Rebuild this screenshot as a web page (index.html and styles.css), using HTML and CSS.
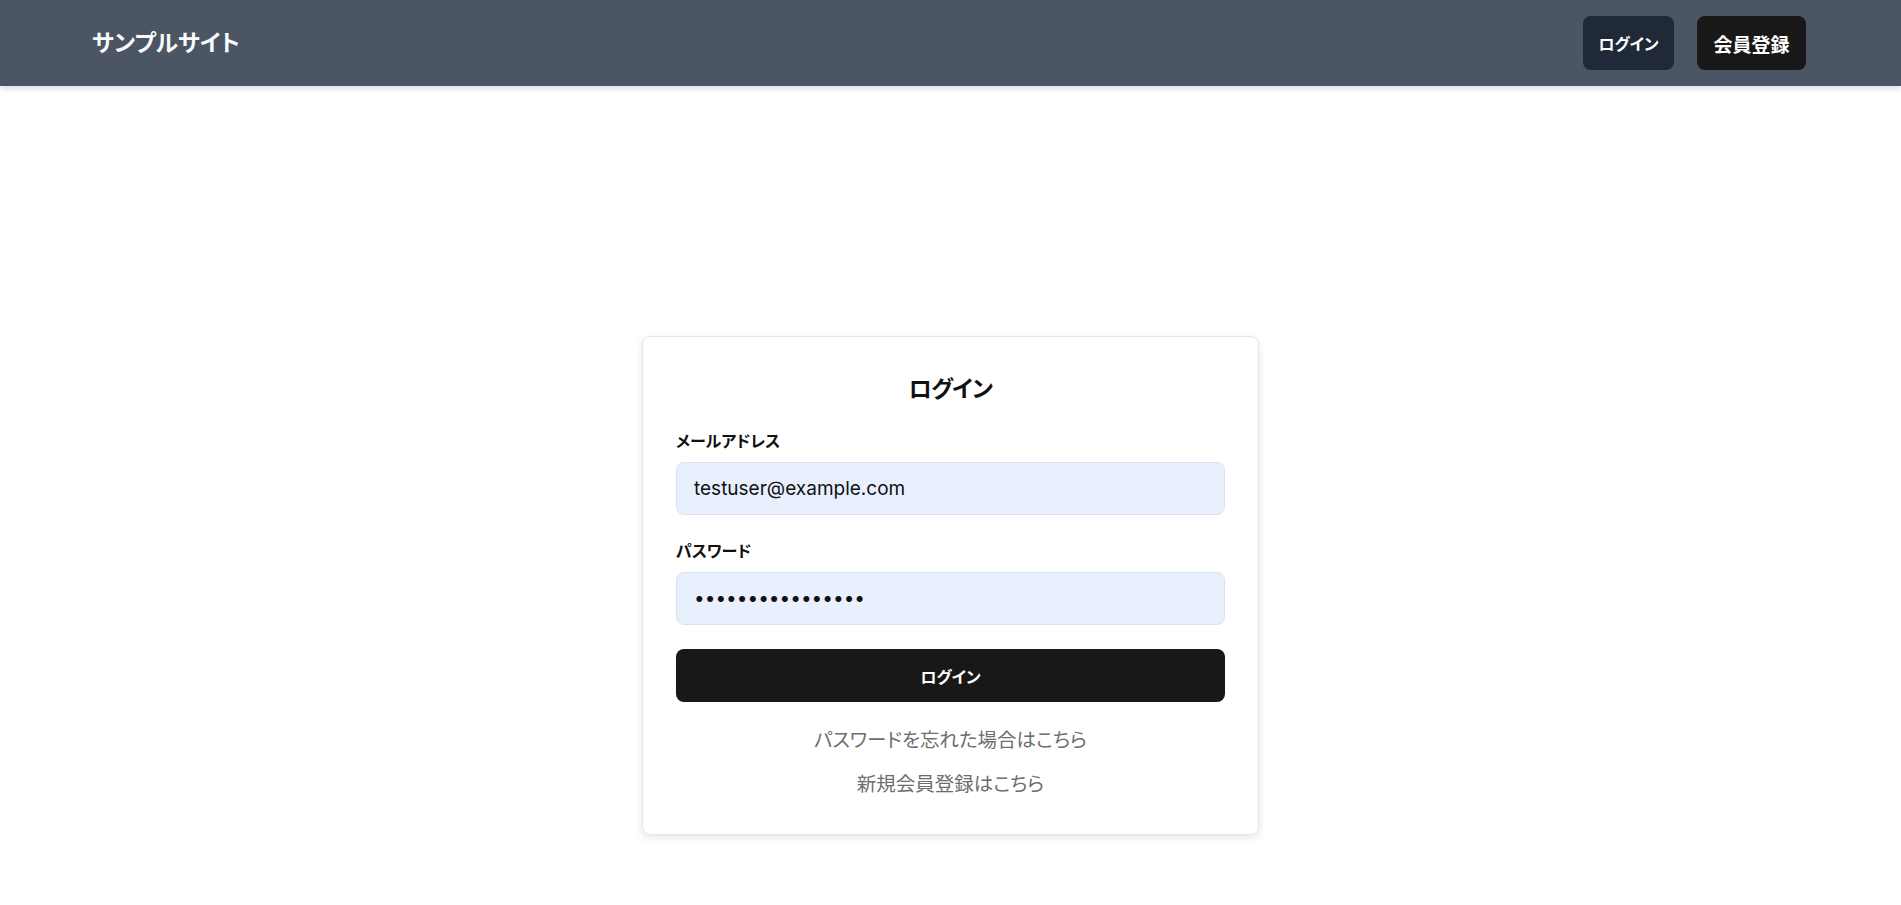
FILE: index.html
```html
<!DOCTYPE html>
<html lang="ja">
<head>
<meta charset="utf-8">
<title>ログイン | サンプルサイト</title>
<link rel="stylesheet" href="styles.css">
</head>
<body>
<header class="site-header">
  <div class="brand">サンプルサイト</div>
  <nav class="nav">
    <a class="nav-btn nav-login" href="#">ログイン</a>
    <a class="nav-btn nav-register" href="#">会員登録</a>
  </nav>
</header>
<main class="main">
  <section class="card">
    <h1 class="card-title">ログイン</h1>
    <form class="form">
      <div class="field">
        <label class="label" for="email">メールアドレス</label>
        <input class="input" id="email" type="email" value="testuser@example.com">
      </div>
      <div class="field">
        <label class="label" for="password">パスワード</label>
        <input class="input input-password" id="password" type="password" value="password12345678">
      </div>
      <button class="submit" type="button">ログイン</button>
    </form>
    <div class="links">
      <a class="link" href="#">パスワードを忘れた場合はこちら</a>
      <a class="link" href="#">新規会員登録はこちら</a>
    </div>
  </section>
</main>
</body>
</html>
```
FILE: styles.css
```css
* { box-sizing: border-box; }
html, body { margin: 0; padding: 0; }
body {
  background: #ffffff;
  font-family: "Noto Sans CJK JP", "Noto Sans", sans-serif;
  font-feature-settings: "palt";
  color: #111111;
  min-height: 905px;
}
.site-header {
  height: 86px;
  background: #4b5563;
  display: flex;
  align-items: center;
  justify-content: space-between;
  padding: 0 95px 0 92px;
  box-shadow: 0 3px 6px rgba(0,0,0,0.12);
  position: relative;
}
.brand {
  color: #f9fafb;
  font-size: 23px;
  font-weight: 700;
  line-height: 1;
  margin-bottom: 4px;
}
.nav { display: flex; gap: 23px; align-items: center; }
.nav-btn {
  display: flex;
  align-items: center;
  justify-content: center;
  height: 54px;
  border-radius: 8px;
  color: #ffffff;
  text-decoration: none;
  font-weight: 700;
}
.nav-login {
  width: 91px;
  background: #1f2937;
  font-size: 16px;
}
.nav-register {
  width: 109px;
  background: #181818;
  font-size: 19px;
}
.main {
  display: flex;
  justify-content: center;
  padding-top: 250px;
}
.card {
  width: 617px;
  background: #ffffff;
  border: 1px solid #e5e7eb;
  border-radius: 8px;
  box-shadow: 0 3px 8px rgba(0,0,0,0.1);
  padding: 32px 33px 36px;
}
.card-title {
  margin: 0 0 22px;
  text-align: center;
  font-size: 23px;
  line-height: 36px;
  font-weight: 700;
  letter-spacing: -0.8px;
  color: #111111;
}
.form { display: flex; flex-direction: column; }
.field { display: flex; flex-direction: column; margin-bottom: 22px; }
.field:last-of-type { margin-bottom: 24px; }
.label {
  font-size: 16px;
  line-height: 27px;
  font-weight: 700;
  margin-bottom: 8px;
  color: #111111;
}
.input {
  height: 53px;
  width: 100%;
  border: 1px solid #dde3ec;
  border-radius: 8px;
  background: #e8f0fe;
  padding: 0 17px;
  font-family: Inter, "Noto Sans", sans-serif;
  font-size: 19px;
  color: #111111;
  outline: none;
}
.input-password { letter-spacing: 0; }
.submit {
  height: 53px;
  width: 100%;
  border: none;
  border-radius: 8px;
  background: #181818;
  color: #ffffff;
  font-family: "Noto Sans CJK JP", sans-serif;
  font-feature-settings: "palt";
  font-size: 16px;
  font-weight: 700;
  cursor: pointer;
}
.links {
  display: flex;
  flex-direction: column;
  align-items: center;
  gap: 14px;
  margin-top: 22px;
}
.link {
  color: #6e6e6e;
  text-decoration: none;
  font-size: 19.5px;
  line-height: 30px;
}
```
